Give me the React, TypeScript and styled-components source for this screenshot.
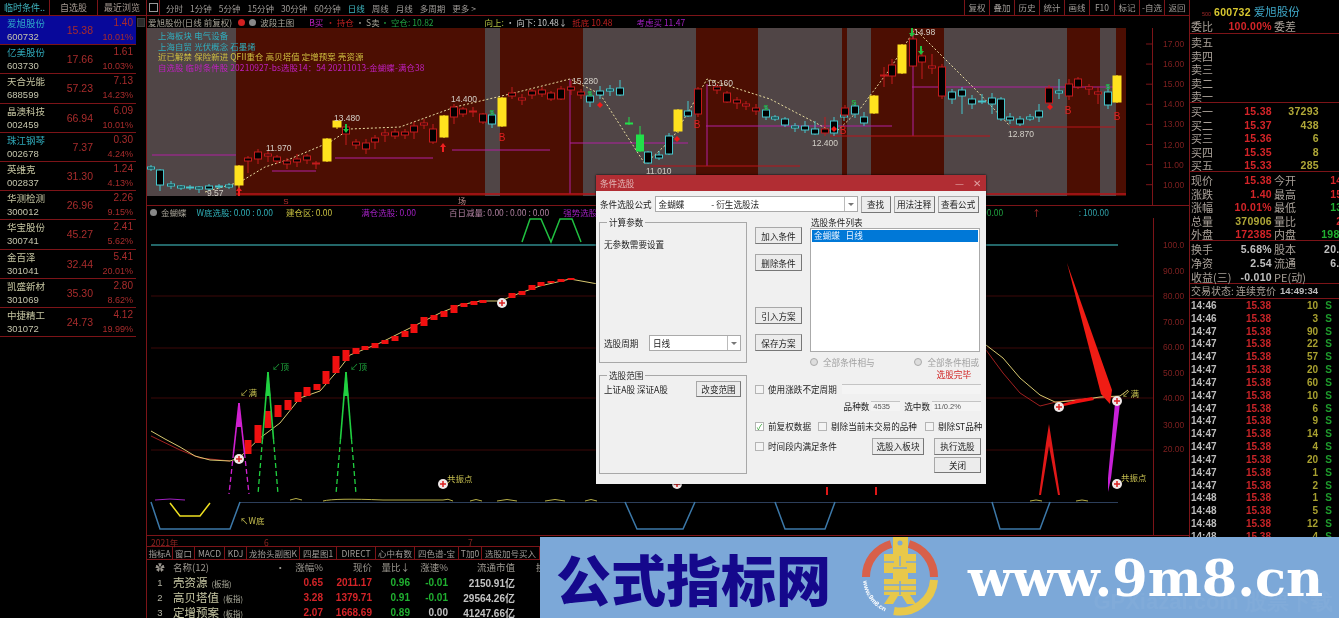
import React from "react";
import styled, { createGlobalStyle } from "styled-components";

const GlobalStyle = createGlobalStyle`
  html, body { margin: 0; padding: 0; background: #000; }
  * { box-sizing: border-box; }
`;

const CJK = `"Noto Sans CJK SC", "Noto Sans", sans-serif`;
const NUM = `"Liberation Sans", "Noto Sans CJK SC", sans-serif`;
const LINE = "#7c1418";

const Page = styled.div`
  position: relative;
  width: 1339px;
  height: 618px;
  overflow: hidden;
  background: #000;
  display: grid;
  grid-template-columns: 147px 1042px 150px;
  font-family: ${CJK};
  filter: blur(0.45px);
`;

/* left stock list */
const LeftCol = styled.div`
  border-right: 1px solid ${LINE};
  height: 100%;
`;
const LeftTabs = styled.div`
  display: grid;
  grid-template-columns: 50px 48px 48px;
  height: 16px;
  border-bottom: 1px solid ${LINE};
`;
const LeftTab = styled.div`
  font-size: 9px;
  line-height: 15px;
  color: #a89c94;
  text-align: center;
  border-right: 1px solid ${LINE};
  &:first-child { color: #3fb6c0; }
  &:last-child { border-right: 0; }
`;
const ListWrap = styled.div`
  display: flex;
`;
const StockList = styled.div`
  width: 136px;
`;
const ScrollTrack = styled.div`
  width: 10px;
  padding: 2px 1px;
`;
const ScrollBtn = styled.div`
  height: 9px;
  background: #2a2a2a;
  border: 1px solid #3c3c3c;
`;
const StockRow = styled.div<{ $active?: boolean }>`
  height: 29.2px;
  display: grid;
  grid-template-columns: 46px 40px 40px;
  padding: 0 3px 0 7px;
  align-items: center;
  background: ${(p) => (p.$active ? "#08089a" : "#000")};
  border-bottom: 1px solid ${LINE};
`;
const NameCell = styled.div`
  display: flex;
  flex-direction: column;
  white-space: nowrap;
`;
const StockName = styled.span<{ $color: string }>`
  font-size: 9.5px;
  line-height: 14px;
  color: ${(p) => p.$color};
`;
const StockCode = styled.span`
  font-family: ${NUM};
  font-size: 9.5px;
  line-height: 14px;
  color: #c4c4ac;
`;
const StockPrice = styled.div`
  font-family: ${NUM};
  font-size: 10.5px;
  color: #a82c2c;
  text-align: right;
`;
const ChangeCell = styled.div`
  display: flex;
  flex-direction: column;
  text-align: right;
  font-family: ${NUM};
  color: #a82c2c;
`;
const ChangeValue = styled.span`
  font-size: 10px;
  line-height: 14px;
`;
const ChangePct = styled.span`
  font-size: 9px;
  line-height: 14px;
`;

/* centre column */
const MainCol = styled.div`
  position: relative;
  display: flex;
  flex-direction: column;
  height: 618px;
  overflow: hidden;
`;
const Toolbar = styled.div`
  display: flex;
  justify-content: space-between;
  height: 16px;
  border-bottom: 1px solid ${LINE};
`;
const ToolGroup = styled.div`
  display: flex;
  align-items: center;
`;
const ToolIcon = styled.div`
  width: 13px;
  height: 15px;
  display: flex;
  align-items: center;
  justify-content: center;
  margin-right: 6px;
  border-right: 1px solid ${LINE};
  &::before {
    content: "";
    width: 7px;
    height: 7px;
    border: 1px solid #999;
  }
`;
const ToolItem = styled.span<{ $on?: boolean }>`
  font-size: 8.5px;
  color: ${(p) => (p.$on ? "#3fb6c0" : "#a09c98")};
  margin-right: 7px;
  white-space: nowrap;
`;
const ToolCell = styled.span`
  width: 25px;
  height: 15px;
  line-height: 15px;
  text-align: center;
  font-size: 8.5px;
  color: #a09c98;
  border-left: 1px solid ${LINE};
`;
const Legend = styled.div`
  display: flex;
  align-items: center;
  height: 13px;
  white-space: nowrap;
  position: relative;
`;
const LegendItem = styled.span<{ $color: string; $gap?: number }>`
  font-size: 8.5px;
  color: ${(p) => p.$color};
  margin-left: ${(p) => p.$gap ?? 0}px;
`;
const Dot = styled.span<{ $color: string; $gap?: number }>`
  width: 7px;
  height: 7px;
  border-radius: 50%;
  background: ${(p) => p.$color};
  margin-left: ${(p) => p.$gap ?? 0}px;
`;
const ChartBox = styled.div`
  position: relative;
  line-height: 0;
`;
const Notes = styled.div`
  position: absolute;
  left: 11px;
  top: 2px;
`;
const NoteLine = styled.div<{ $color: string }>`
  font-size: 8.4px;
  line-height: 10.6px;
  letter-spacing: 0.15px;
  color: ${(p) => p.$color};
  white-space: nowrap;
`;
const DateRow = styled.div`
  display: flex;
  height: 12px;
  border-top: 1px solid ${LINE};
  border-bottom: 1px solid ${LINE};
`;
const DateItem = styled.span<{ $w: number }>`
  width: ${(p) => p.$w}px;
  font-size: 8.5px;
  line-height: 12px;
  color: #8c2420;
  padding-left: 4px;
`;
const IndexTabs = styled.div`
  display: flex;
  height: 13px;
  border-bottom: 1px solid ${LINE};
`;
const IndexTab = styled.span<{ $w: number }>`
  width: ${(p) => p.$w}px;
  font-size: 8.5px;
  line-height: 12px;
  text-align: center;
  color: #a09c98;
  border-right: 1px solid ${LINE};
  white-space: nowrap;
  overflow: hidden;
`;
const TableRow = styled.div`
  display: grid;
  grid-template-columns: 26px 100px 12px 38px 49px 38px 38px 67px 40px;
  height: 15px;
  align-items: center;
  white-space: nowrap;
`;
const HeadCell = styled.span<{ $left?: boolean }>`
  font-size: 9.5px;
  color: #9c9890;
  text-align: ${(p) => (p.$left ? "left" : "right")};
`;
const GearCell = styled(HeadCell)`
  text-align: center;
`;
const RowNo = styled.span`
  font-family: ${NUM};
  font-size: 9.5px;
  color: #b0b0a0;
  text-align: center;
`;
const RowName = styled.span`
  font-size: 11.5px;
  color: #c8c8a4;
`;
const RowTag = styled.small`
  font-size: 7.5px;
  margin-left: 4px;
  color: #b0b0a0;
`;
const RowNum = styled.span<{ $color: string }>`
  font-family: ${NUM};
  font-size: 10px;
  font-weight: 700;
  text-align: right;
  color: ${(p) => p.$color};
`;
const RowYi = styled.span`
  font-family: ${NUM};
  font-size: 10px;
  font-weight: 700;
  text-align: right;
  color: #c4c4c4;
`;

/* right quote panel */
const RightCol = styled.div`
  border-left: 1px solid ${LINE};
  height: 100%;
  overflow: hidden;
`;
const QuoteHead = styled.div`
  display: flex;
  align-items: baseline;
  height: 18px;
  padding: 3px 0 0 12px;
`;
const QuoteHint = styled.span`
  font-family: ${NUM};
  font-size: 5.5px;
  color: #a02828;
  width: 12px;
`;
const QuoteCode = styled.span`
  font-family: ${NUM};
  font-weight: 700;
  font-size: 10.5px;
  color: #d8c830;
  letter-spacing: 0.3px;
`;
const QuoteName = styled.span`
  font-size: 11.5px;
  color: #3fa8c8;
  margin-left: 3px;
`;
const Section = styled.div`
  border-bottom: 1px solid ${LINE};
  padding-left: 1px;
`;
const QuoteRow = styled.div<{ $h: number }>`
  display: grid;
  grid-template-columns: 22px 59px 25px 61px;
  height: ${(p) => p.$h}px;
  align-items: center;
  white-space: nowrap;
`;
const BookRow = styled.div`
  display: grid;
  grid-template-columns: 22px 59px 47px;
  height: 13.6px;
  align-items: center;
`;
const QLabel = styled.span<{ $pad?: number }>`
  font-size: 11px;
  color: #a8a098;
  padding-left: ${(p) => p.$pad ?? 0}px;
`;
const QValue = styled.span<{ $color: string }>`
  font-family: ${NUM};
  font-size: 10.5px;
  font-weight: 700;
  text-align: right;
  letter-spacing: 0.3px;
  color: ${(p) => p.$color};
`;
const StatusRow = styled.div`
  display: flex;
  align-items: center;
  height: 15px;
  padding-left: 1px;
  white-space: nowrap;
  border-bottom: 1px solid ${LINE};
  font-size: 10px;
  color: #a8a098;
`;
const StatusTime = styled.span`
  font-family: ${NUM};
  font-size: 9.5px;
  font-weight: 700;
  margin-left: 4px;
  color: #bcbcbc;
`;
const TickRow = styled.div`
  display: grid;
  grid-template-columns: 29px 51px 47px 14px;
  height: 12.85px;
  align-items: center;
  padding-left: 1px;
  font-family: ${NUM};
  font-size: 10px;
  font-weight: 700;
`;
const TickTime = styled.span`
  color: #bcbcbc;
`;
const TickPrice = styled.span`
  color: #c82428;
  text-align: right;
`;
const TickQty = styled.span`
  color: #a8a030;
  text-align: right;
`;
const TickSide = styled.span`
  color: #1e9a2c;
  text-align: right;
`;

/* dialog */
const Dialog = styled.div`
  position: absolute;
  left: 596px;
  top: 175px;
  width: 390px;
  height: 309px;
  background: #f0f0f0;
  color: #222;
  font-size: 8.6px;
  box-shadow: 0 0 2px #000;
`;
const DialogTitle = styled.div`
  display: flex;
  align-items: center;
  justify-content: space-between;
  height: 16px;
  padding: 0 5px 0 4px;
  background: #b12d33;
  color: #e2b4b4;
  font-size: 8.6px;
`;
const WinBtns = styled.span`
  display: flex;
  gap: 9px;
  align-items: center;
  color: #e0a0a0;
  font-size: 10px;
  line-height: 1;
`;
const DialogBody = styled.div`
  padding: 5px 5px 0 3px;
`;
const FormulaRow = styled.div`
  display: flex;
  align-items: center;
  gap: 3px;
  height: 16px;
  padding-left: 1px;
`;
const FieldText = styled.span`
  white-space: nowrap;
`;
const Combo = styled.div<{ $w: number }>`
  width: ${(p) => p.$w}px;
  height: 16px;
  display: flex;
  align-items: center;
  background: #fff;
  border: 1px solid #aaa;
  padding-left: 3px;
  white-space: pre;
  position: relative;
  justify-content: space-between;
`;
const ComboArrow = styled.span`
  width: 13px;
  height: 100%;
  border-left: 1px solid #bbb;
  display: flex;
  align-items: center;
  justify-content: center;
  &::before {
    content: "";
    border: 3px solid transparent;
    border-top: 3px solid #777;
    margin-top: 3px;
  }
`;
const Btn = styled.button<{ $w: number; $h?: number; $ml?: number }>`
  width: ${(p) => p.$w}px;
  height: ${(p) => p.$h ?? 17}px;
  margin-left: ${(p) => p.$ml ?? 0}px;
  padding: 0;
  font-family: ${CJK};
  font-size: 8.6px;
  color: #222;
  background: #ececec;
  border: 1px solid #a8a8a8;
  border-right-color: #777;
  border-bottom-color: #777;
  white-space: nowrap;
`;
const Columns = styled.div`
  display: flex;
  gap: 8px;
  margin-top: 5px;
`;
const LeftPane = styled.div`
  width: 149px;
  display: flex;
  flex-direction: column;
  gap: 7px;
`;
const Group = styled.fieldset<{ $h: number }>`
  height: ${(p) => p.$h}px;
  margin: 0;
  padding: 0 5px 0 4px;
  border: 1px solid #a8a8a8;
  min-width: 0;
  display: flex;
  flex-direction: column;
`;
const GroupTitle = styled.legend`
  padding: 0 2px;
  margin-left: 3px;
  font-size: 8.6px;
  line-height: 10px;
`;
const GroupLine = styled.div<{ $mt: number }>`
  display: flex;
  align-items: center;
  justify-content: space-between;
  margin-top: ${(p) => p.$mt}px;
`;
const RightPane = styled.div`
  width: 226px;
`;
const TopPane = styled.div`
  display: flex;
  gap: 8px;
`;
const ButtonStack = styled.div`
  width: 47px;
  display: flex;
  flex-direction: column;
  padding-top: 10px;
`;
const StackBtn = styled(Btn)<{ $mt?: number }>`
  margin-top: ${(p) => p.$mt ?? 0}px;
`;
const ListPane = styled.div`
  width: 170px;
`;
const ListLabel = styled.div`
  height: 11px;
  line-height: 10px;
  padding-left: 1px;
`;
const ListBox = styled.div`
  height: 124px;
  background: #fff;
  border: 1px solid #aaa;
  padding: 1px;
`;
const ListItem = styled.div`
  height: 12px;
  line-height: 11px;
  padding-left: 2px;
  background: #0078d7;
  color: #e8f2ff;
  white-space: pre;
`;
const RadioRow = styled.div`
  display: flex;
  justify-content: space-between;
  height: 14px;
  margin-top: 3px;
  padding: 0 2px 0 55px;
  align-items: center;
`;
const Radio = styled.span`
  display: flex;
  align-items: center;
  gap: 5px;
  color: #a0a0a0;
  &::before {
    content: "";
    width: 6px;
    height: 6px;
    border-radius: 50%;
    border: 1px solid #aaa;
    background: #ddd;
  }
`;
const DoneText = styled.div`
  text-align: right;
  color: #d02020;
  padding-right: 10px;
  height: 10px;
  line-height: 10px;
`;
const OptionRow = styled.div<{ $mt: number; $h?: number }>`
  display: flex;
  align-items: center;
  margin-top: ${(p) => p.$mt}px;
  height: ${(p) => p.$h ?? 12}px;
  white-space: nowrap;
`;
const Check = styled.span<{ $on?: boolean; $gap?: number }>`
  width: 9px;
  height: 9px;
  flex: none;
  margin-left: ${(p) => p.$gap ?? 0}px;
  margin-right: 4px;
  background: ${(p) => (p.$on ? "#fff" : "#f4f4f4")};
  border: 1px solid #b4b4b4;
  color: #30a030;
  font-size: 8px;
  line-height: 7px;
  text-align: center;
`;
const ReadOnly = styled.div<{ $w: number; $gap?: number }>`
  width: ${(p) => p.$w}px;
  height: 10px;
  line-height: 9px;
  margin-left: ${(p) => p.$gap ?? 0}px;
  padding-left: 2px;
  background: #f4f4f4;
  border-top: 1px solid #c4c4c4;
  font-size: 7.5px;
  color: #555;
  font-family: ${NUM};
`;
const Spacer = styled.span`
  flex: 1;
`;

/* watermark banner */
const Banner = styled.div`
  position: absolute;
  left: 540px;
  top: 537px;
  width: 799px;
  height: 81px;
  background: #7ca8d8;
  display: flex;
  align-items: center;
`;
const BannerTitle = styled.div`
  width: 315px;
  padding-left: 16px;
  font-size: 55px;
  line-height: 81px;
  font-weight: 900;
  color: #15088c;
  white-space: nowrap;
`;
const BannerUrl = styled.div`
  margin-left: 23px;
  font-family: "DejaVu Serif", serif;
  font-weight: 700;
  font-size: 51px;
  color: #fff;
  white-space: nowrap;
`;
const BannerFaint = styled.div`
  position: absolute;
  right: 6px;
  bottom: 1px;
  font-family: "Liberation Sans", sans-serif;
  font-weight: 700;
  font-size: 22px;
  color: rgba(255, 255, 255, 0.04);
`;

type Kind = "r" | "c" | "y" | "g";
const candles: [number, number, number, number, number, Kind][] = [
  [151, 166, 168, 170, 172, "c"], [160, 170, 171, 186, 192, "c"], [171, 182, 185, 187, 190, "c"], [181, 186, 187, 189, 191, "c"],
  [190, 186, 188, 189, 191, "c"], [199, 187, 188, 190, 194, "c"], [209, 185, 187, 190, 192, "c"], [219, 185, 187, 188, 190, "c"],
  [229, 184, 186, 188, 190, "c"], [239, 166, 167, 186, 190, "y"], [248, 157, 159, 162, 174, "r"], [258, 150, 153, 160, 165, "r"],
  [268, 152, 155, 157, 163, "r"], [277, 156, 158, 162, 165, "r"], [287, 159, 162, 165, 170, "r"], [297, 155, 160, 163, 168, "r"],
  [307, 155, 157, 161, 165, "r"], [316, 162, 164, 165, 170, "r"], [327, 139, 140, 162, 163, "y"], [337, 121, 122, 128, 130, "y"],
  [346, 125, 128, 135, 146, "r"], [356, 140, 143, 146, 150, "r"], [366, 140, 144, 150, 155, "r"], [375, 136, 139, 143, 150, "r"],
  [385, 130, 134, 136, 143, "r"], [395, 130, 133, 137, 140, "r"], [405, 130, 133, 136, 140, "r"], [414, 123, 127, 133, 140, "r"],
  [424, 120, 124, 126, 130, "r"], [433, 125, 130, 143, 145, "r"], [444, 116, 117, 138, 139, "y"], [454, 105, 108, 118, 125, "r"],
  [463, 108, 110, 115, 118, "r"], [473, 108, 112, 113, 118, "r"], [483, 114, 115, 123, 125, "r"], [492, 112, 116, 125, 129, "c"],
  [502, 98, 99, 127, 128, "y"], [512, 88, 94, 97, 100, "r"], [522, 95, 99, 101, 106, "r"], [532, 90, 92, 96, 100, "r"],
  [542, 88, 91, 95, 98, "r"], [551, 92, 94, 100, 102, "r"], [561, 87, 90, 100, 101, "r"], [571, 82, 88, 91, 96, "r"],
  [581, 90, 93, 96, 100, "r"], [590, 92, 97, 103, 108, "c"], [600, 87, 92, 96, 100, "c"], [610, 86, 90, 92, 97, "c"],
  [620, 81, 89, 96, 97, "c"], [629, 118, 124, 125, 126, "g"], [640, 127, 136, 152, 153, "g"], [648, 152, 153, 164, 165, "c"],
  [659, 152, 156, 159, 161, "c"], [669, 134, 137, 155, 156, "c"], [678, 110, 111, 132, 134, "y"], [688, 102, 112, 117, 118, "c"],
  [698, 88, 90, 115, 118, "r"], [717, 85, 88, 91, 95, "r"], [727, 92, 94, 103, 104, "r"], [737, 98, 101, 104, 110, "r"],
  [746, 102, 105, 107, 111, "r"], [756, 105, 109, 112, 116, "r"], [766, 107, 111, 118, 121, "c"], [775, 116, 118, 120, 122, "c"],
  [785, 118, 120, 126, 128, "c"], [795, 124, 127, 129, 133, "c"], [805, 122, 127, 131, 134, "c"], [815, 122, 130, 135, 136, "c"],
  [825, 118, 130, 134, 137, "r"], [834, 118, 122, 134, 137, "c"], [844, 114, 116, 118, 122, "c"], [845, 106, 109, 116, 118, "r"],
  [855, 103, 107, 115, 119, "c"], [864, 113, 118, 124, 127, "c"], [874, 96, 97, 114, 115, "y"], [884, 68, 76, 77, 88, "r"],
  [892, 60, 66, 77, 85, "r"], [902, 45, 46, 74, 75, "y"], [913, 30, 40, 67, 68, "r"], [922, 50, 57, 63, 80, "r"],
  [932, 55, 67, 69, 75, "r"], [942, 65, 68, 97, 100, "r"], [952, 90, 93, 100, 105, "c"], [962, 88, 91, 97, 115, "c"],
  [972, 96, 100, 105, 110, "c"], [982, 95, 102, 103, 105, "c"], [992, 94, 99, 105, 115, "c"], [1001, 98, 100, 120, 122, "c"],
  [1010, 114, 118, 121, 125, "c"], [1020, 117, 120, 125, 127, "c"], [1030, 115, 118, 120, 122, "c"], [1039, 105, 112, 118, 123, "c"],
  [1049, 86, 89, 104, 106, "r"], [1059, 80, 92, 94, 100, "c"], [1069, 80, 85, 97, 101, "r"], [1078, 78, 80, 88, 90, "r"],
  [1089, 85, 88, 90, 96, "r"], [1098, 88, 93, 95, 105, "r"], [1108, 85, 93, 106, 110, "c"], [1117, 76, 77, 103, 104, "y"],
];

const bands: [number, number, boolean][] = [
  [147, 236, false], [236, 485, true], [485, 500, false], [500, 583, true], [583, 696, false], [696, 758, true],
  [758, 842, false], [842, 847, true], [847, 871, false], [871, 944, true], [944, 1067, false], [1067, 1100, true],
  [1100, 1116, false], [1116, 1126, true],
];

const purpleLines: [number, number, number, number][] = [
  [152, 156, 236, 156], [272, 172, 316, 172], [335, 159, 433, 159], [452, 151, 550, 151], [570, 144, 688, 144], [570, 80, 570, 195],
  [706, 127, 892, 127], [707, 85, 707, 167], [912, 88, 1118, 88], [913, 30, 913, 137],
];
const redLines: [number, number, number, number][] = [
  [236, 195, 1126, 195], [650, 167, 800, 167], [830, 137, 990, 137], [1010, 128, 1115, 128],
];
const trend = "205,193 240,183 265,168 290,160 330,143 350,130 400,128 455,108 510,95 570,80 600,95 645,165 672,140 690,110 707,80 770,100 835,134 860,110 890,70 915,30 945,60 975,90 1010,127";
const priceTags: [number, number, string][] = [
  [207, 197, "9.57"], [266, 152, "11.970"], [334, 122, "13.480"], [451, 103, "14.400"], [572, 85, "15.280"], [707, 87, "15.160"],
  [646, 175, "11.010"], [812, 147, "12.400"], [1008, 138, "12.870"], [914, 36, "14.98"],
];
const buyMarks: [number, number][] = [[502, 142], [697, 129], [843, 135], [1068, 115], [1117, 121]];
const greenS: [number, number][] = [[590, 97], [492, 116], [766, 111], [854, 106], [1108, 90]];
const diamonds: [number, number][] = [[600, 106], [677, 140], [834, 130], [1050, 108]];
const axisTop = ["17.00", "16.00", "15.00", "14.00", "13.00", "12.00", "11.00", "10.00"];

const KLineChart = () => (
  <svg width={1042} height={178} viewBox="147 29 1042 178">
    {bands.map(([a, b, warm]) => (
      <rect key={a} x={a} y={29} width={b - a} height={168} fill={warm ? "#4c0e02" : "#504546"} />
    ))}
    {purpleLines.map(([x1, y1, x2, y2], i) => (
      <line key={i} x1={x1} y1={y1} x2={x2} y2={y2} stroke="#b020a0" strokeWidth={1} />
    ))}
    {redLines.map(([x1, y1, x2, y2], i) => (
      <line key={i} x1={x1} y1={y1} x2={x2} y2={y2} stroke="#b8141a" strokeWidth={i === 0 ? 1.5 : 1} />
    ))}
    <polyline points={trend} fill="none" stroke="#e8dca0" strokeWidth={1} strokeDasharray="2 2" />
    {candles.map(([x, wt, t, b, wb, k], i) => {
      const col = { r: "#c41a1c", c: "#45c6cc", y: "#ffe21e", g: "#22e04a" }[k];
      const solid = k === "y" || k === "g";
      const w = k === "y" ? 8 : 7;
      return (
        <g key={i}>
          <line x1={x} y1={wt} x2={x} y2={wb} stroke={col} />
          <rect x={x - w / 2} y={t} width={w} height={b - t} fill={solid ? col : "#000"} stroke={col} />
        </g>
      );
    })}
    {priceTags.map(([x, y, t]) => (
      <text key={t} x={x} y={y} fontFamily="Liberation Sans" fontSize={8.5} fill="#d4d0c8">{t}</text>
    ))}
    {buyMarks.map(([x, y]) => (
      <text key={x} x={x} y={y} textAnchor="middle" fontFamily="Liberation Sans" fontSize={10} fill="#e02020">B</text>
    ))}
    {greenS.map(([x, y]) => (
      <text key={x} x={x} y={y} textAnchor="middle" fontFamily="Liberation Sans" fontSize={8} fontWeight={700} fill="#20b040">S</text>
    ))}
    {diamonds.map(([x, y]) => (
      <polygon key={x} points={`${x},${y - 3} ${x + 3},${y} ${x},${y + 3} ${x - 3},${y}`} fill="#f01818" />
    ))}
    <path d="M239 188l3 4h-2v5h-2v-5h-2zM443 144l3 4h-2v5h-2v-5h-2z" fill="#f02020" />
    <path d="M346 134l3-4h-2v-5h-2v5h-2zM921 56l3-4h-2v-5h-2v5h-2zM912 38l3-4h-2v-5h-2v5h-2z" fill="#20c040" />
    <text x={286} y={205} textAnchor="middle" fontFamily="Liberation Sans" fontSize={8} fill="#c03030">S</text>
    <text x={462} y={205} textAnchor="middle" fontFamily="Noto Sans CJK SC" fontSize={8} fill="#c08888">场</text>
    <line x1={1152.5} y1={29} x2={1152.5} y2={207} stroke={LINE} />
    <line x1={147} y1={206.5} x2={1189} y2={206.5} stroke={LINE} />
    {axisTop.map((t, i) => (
      <g key={t}>
        <line x1={1146} x2={1152} y1={45 + i * 20.1} y2={45 + i * 20.1} stroke={LINE} />
        <text x={1163} y={48 + i * 20.1} fontFamily="Liberation Sans" fontSize={8.5} fill="#7e2020">{t}</text>
      </g>
    ))}
  </svg>
);

const redBars: [number, number, number][] = [
  [248, 442, 456], [258, 427, 445], [268, 413, 430], [278, 407, 419], [288, 402, 412], [298, 394, 404], [307, 389, 398], [317, 386, 392],
  [326, 373, 386], [336, 358, 375], [346, 352, 363], [356, 350, 356], [365, 348, 352], [375, 345, 350], [385, 342, 346], [395, 338, 343],
  [405, 333, 339], [414, 326, 335], [424, 319, 328], [434, 317, 322], [444, 313, 319], [454, 307, 315], [464, 305, 309], [474, 303, 307],
  [483, 302, 305], [512, 295, 300], [522, 293, 297], [532, 287, 292], [541, 284, 288], [551, 283, 285], [561, 281, 284], [571, 280, 282],
];
const axisLow: [string, number][] = [
  ["100.0", 250], ["90.00", 276], ["80.00", 301], ["70.00", 327], ["60.00", 352], ["50.00", 378], ["40.00", 403], ["30.00", 430], ["20.00", 454],
];
const plusMarks: [number, number][] = [[239, 461], [502, 305], [443, 486], [677, 486], [1059, 409], [1117, 403], [1117, 486]];
const trapezoids = [
  "151,504 160,531 230,531 240,504", "625,504 637,531 683,531 695,504", "775,504 785,531 825,531 835,504", "992,504 1000,531 1040,531 1050,504",
];
const spikes: [number, number, string][] = [[239, 405, "#d020d0"], [268, 374, "#20d040"], [346, 374, "#20d040"]];
const humps = [
  "M290 502q6-3 12 0", "M323 503q12-3 60 -1", "M383 502h60", "M443 502q5-2 10 1", "M470 503q6-3 12 0", "M497 503q10-3 20 0", "M545 503q10-3 20 0", "M585 503q6-3 12 0",
  "M1030 503q6-2 12 0", "M1076 503q6-2 12 0",
];

const IndicatorChart = () => (
  <svg width={1042} height={317} viewBox="147 220 1042 317">
    {[298, 350, 400, 452].map((y) => (
      <line key={y} x1={151} x2={1153} y1={y} y2={y} stroke="#3c0808" />
    ))}
    <line x1={151} x2={1118} y1={247} y2={247} stroke="#2f8a8c" strokeWidth={1.5} />
    <polyline points="522,244 530,221 541,221 551,244 560,221 572,221 581,244" fill="none" stroke="#20c040" strokeWidth={1.5} />
    <polyline points="151,438 180,452 200,460 230,463" fill="none" stroke="#a02020" />
    <polyline points="151,433 165,441 180,449 195,458 210,462 230,463 239,460 260,440 280,425 300,400 320,393 340,370 350,357 380,345 400,335 420,325 440,315 460,307 480,303 500,303 520,295 540,288 570,281 598,286" fill="none" stroke="#d8c870" />
    <polyline points="986,352 1003,375 1020,395 1040,408 1056,404 1080,401 1117,399" fill="none" stroke="#a02020" />
    <polyline points="986,347 1003,360 1020,380 1040,397 1055,404 1058,404 1080,402 1100,399 1120,398 1128,392" fill="none" stroke="#d8c870" />
    {redBars.map(([x, t, b]) => (
      <rect key={x} x={x - 3.5} y={t} width={7} height={b - t} fill="#f01010" />
    ))}
    <path d="M1062 406l14-4 16-3 2 3-16 3-14 3z" fill="#f01010" />
    {spikes.map(([x, y, c]) => {
      const mid = y + (496 - y) * 0.55;
      const off = ((mid - y) / (496 - y)) * 10;
      return (
        <g key={x}>
          <polygon points={`${x},${y} ${x + 2.5},${y + 24} ${x - 2.5},${y + 24}`} fill={c} />
          <polyline points={`${x},${y} ${x - off},${mid}`} stroke={c} strokeWidth={1.6} fill="none" />
          <polyline points={`${x},${y} ${x + off},${mid}`} stroke={c} strokeWidth={1.6} fill="none" />
          <polyline points={`${x - off},${mid} ${x - 10},496`} stroke={c} strokeWidth={1.3} strokeDasharray="5 3" fill="none" />
          <polyline points={`${x + off},${mid} ${x + 10},496`} stroke={c} strokeWidth={1.3} strokeDasharray="5 3" fill="none" />
        </g>
      );
    })}
    <polygon points="1049,426 1052,445 1060,497 1058,497 1049,448 1041,497 1039,497 1046,445" fill="#e01818" />
    <path d="M827 489v8M876 489v8" stroke="#e01818" strokeWidth={2} />
    <polygon points="1115,405 1120,405 1111,480 1108,494 1108,480" fill="#c820d8" />
    <polygon points="1067,265 1112,392 1110,406 1101,396" fill="#f01c14" />
    {humps.map((d) => (
      <path key={d} d={d} fill="none" stroke="#b8b048" />
    ))}
    <path d="M155 502q15-2 30 0" fill="none" stroke="#a020c0" />
    <line x1={240} x2={1118} y1={504.5} y2={504.5} stroke="#2c3e5a" />
    {trapezoids.map((p) => (
      <polyline key={p} points={p} fill="none" stroke="#3c78a8" strokeWidth={1.5} />
    ))}
    <polyline points="170,505 180,518 200,518 210,505" fill="none" stroke="#eee020" strokeWidth={1.5} />
    {plusMarks.map(([x, y]) => (
      <g key={`${x}-${y}`}>
        <circle cx={x} cy={y} r={5} fill="#f0e8e8" />
        <path d={`M${x - 3} ${y}h6M${x} ${y - 3}v6`} stroke="#d82020" strokeWidth={1.5} />
      </g>
    ))}
    <g fontFamily="Noto Sans CJK SC" fontSize={8.5}>
      <text x={240} y={398} fill="#c8c050">↙满</text>
      <text x={272} y={372} fill="#20b040">↙顶</text>
      <text x={350} y={372} fill="#20b040">↙顶</text>
      <text x={447} y={484} fill="#c8c050">共振点</text>
      <text x={1121} y={483} fill="#c8c050">共振点</text>
      <text x={1122} y={399} fill="#c8c050">↙满</text>
      <text x={240} y={526} fill="#c8c050">↖W底</text>
    </g>
    <line x1={1153.5} y1={220} x2={1153.5} y2={537} stroke={LINE} />
    {axisLow.map(([t, y]) => (
      <text key={t} x={1163} y={y} fontFamily="Liberation Sans" fontSize={8.5} fill="#7e2020">{t}</text>
    ))}
  </svg>
);

const stocks = [
  ["爱旭股份", "600732", "15.38", "1.40", "10.01%", "#2fa8c8"],
  ["亿美股份", "603730", "17.66", "1.61", "10.03%", "#2fa8b8"],
  ["天合光能", "688599", "57.23", "7.13", "14.23%", "#c4c4a0"],
  ["晶澳科技", "002459", "66.94", "6.09", "10.01%", "#c4c4a0"],
  ["珠江钢琴", "002678", "7.37", "0.30", "4.24%", "#2fa8b8"],
  ["英维克", "002837", "31.30", "1.24", "4.13%", "#c4c4a0"],
  ["华测检测", "300012", "26.96", "2.26", "9.15%", "#c4c4a0"],
  ["华宝股份", "300741", "45.27", "2.41", "5.62%", "#c4c4a0"],
  ["金百泽", "301041", "32.44", "5.41", "20.01%", "#c4c4a0"],
  ["凯盛新材", "301069", "35.30", "2.80", "8.62%", "#c4c4a0"],
  ["中捷精工", "301072", "24.73", "4.12", "19.99%", "#c4c4a0"],
];
const ticks: [string, string][] = [
  ["14:46", "10"], ["14:46", "3"], ["14:47", "90"], ["14:47", "22"], ["14:47", "57"], ["14:47", "20"], ["14:47", "60"], ["14:47", "10"],
  ["14:47", "6"], ["14:47", "9"], ["14:47", "14"], ["14:47", "4"], ["14:47", "20"], ["14:47", "1"], ["14:47", "2"], ["14:48", "1"],
  ["14:48", "5"], ["14:48", "12"], ["14:48", "4"],
];
const RED = "#d42428";
const YEL = "#b0a838";
const GRN = "#20b030";
const WHT = "#c0c0c0";
const book = [
  ["买一", "15.38", "37293"], ["买二", "15.37", "438"], ["买三", "15.36", "6"], ["买四", "15.35", "8"], ["买五", "15.33", "285"],
];
const quoteA = [
  ["现价", "15.38", RED, "今开", "14.00", RED], ["涨跌", "1.40", RED, "最高", "15.38", RED], ["涨幅", "10.01%", RED, "最低", "13.84", GRN],
  ["总量", "370906", YEL, "量比", "2.07", RED], ["外盘", "172385", RED, "内盘", "198521", GRN],
];
const quoteB = [
  ["换手", "5.68%", WHT, "股本", "20.364", WHT], ["净资", "2.54", WHT, "流通", "6.524", WHT], ["收益(三)", "-0.010", WHT, "PE(动)", "", WHT],
];
const periodTabs = ["1分钟", "5分钟", "15分钟", "30分钟", "60分钟"];
const rightTabs = ["复权", "叠加", "历史", "统计", "画线", "F10", "标记", "-自选", "返回"];
const indexTabs: [string, number][] = [
  ["指标A", 26], ["窗口", 22], ["MACD", 30], ["KDJ", 22], ["龙抬头副图K", 53], ["四星图1", 37], ["DIRECT", 39], ["心中有数", 39], ["四色谱-宝", 44], ["T加0", 23], ["选股加号买入", 58],
];
const rows = [
  ["1", "壳资源", "0.65", "2011.17", "0.96", "-0.01", GRN, "2150.91亿"],
  ["2", "高贝塔值", "3.28", "1379.71", "0.91", "-0.01", GRN, "29564.26亿"],
  ["3", "定增预案", "2.07", "1668.69", "0.89", "0.00", WHT, "41247.66亿"],
];

const Logo = () => (
  <svg width={90} height={81} viewBox="0 0 90 81">
    <path d="M11 40A34 34 0 0 1 36 7" fill="none" stroke="#d8604a" strokeWidth={8} />
    <path d="M54 7A34 34 0 0 1 79 40" fill="none" stroke="#d8604a" strokeWidth={8} />
    <path d="M79 43A34 34 0 0 1 39 74" fill="none" stroke="#e8c84a" strokeWidth={8} />
    <path d="M38 0h15v17h8v19H53v6h8v16h-6l6 9H52l-5-8h-4l-5 8H29l6-9h-6V42h9v-6H29V17h9z" fill="#e8c84a" />
    <circle cx={45} cy={6} r={2.5} fill="#7ca8d8" />
    <path d="M29 25h10M51 25h10M38 31h14M45 19v10M29 48h32M29 54h32M45 44v14" stroke="#7ca8d8" strokeWidth={1.5} fill="none" />
    <path id="logoArc" d="M8 44A37 37 0 0 0 38 77" fill="none" />
    <text fontFamily="Liberation Sans" fontSize={6.5} fontWeight={700} fill="#fff">
      <textPath href="#logoArc">www.9m8.cn</textPath>
    </text>
  </svg>
);

const App: React.FC = () => (
  <Page>
    <GlobalStyle />
    <LeftCol>
      <LeftTabs>
        <LeftTab>临时条件..</LeftTab>
        <LeftTab>自选股</LeftTab>
        <LeftTab>最近浏览</LeftTab>
      </LeftTabs>
      <ListWrap>
        <StockList>
          {stocks.map(([name, code, price, chg, pct, color], i) => (
            <StockRow key={code} $active={i === 0}>
              <NameCell>
                <StockName $color={color}>{name}</StockName>
                <StockCode>{code}</StockCode>
              </NameCell>
              <StockPrice>{price}</StockPrice>
              <ChangeCell>
                <ChangeValue>{chg}</ChangeValue>
                <ChangePct>{pct}</ChangePct>
              </ChangeCell>
            </StockRow>
          ))}
        </StockList>
        <ScrollTrack>
          <ScrollBtn />
        </ScrollTrack>
      </ListWrap>
    </LeftCol>

    <MainCol>
      <Toolbar>
        <ToolGroup>
          <ToolIcon />
          <ToolItem>分时</ToolItem>
          {periodTabs.map((t) => (
            <ToolItem key={t}>{t}</ToolItem>
          ))}
          <ToolItem $on>日线</ToolItem>
          <ToolItem>周线</ToolItem>
          <ToolItem>月线</ToolItem>
          <ToolItem>多周期</ToolItem>
          <ToolItem>更多 &gt;</ToolItem>
        </ToolGroup>
        <ToolGroup>
          {rightTabs.map((t) => (
            <ToolCell key={t}>{t}</ToolCell>
          ))}
        </ToolGroup>
      </Toolbar>
      <Legend>
        <LegendItem $color="#a8a498" $gap={1}>爱旭股份(日线 前复权)</LegendItem>
        <Dot $color="#d02020" $gap={6} />
        <Dot $color="#888" $gap={4} />
        <LegendItem $color="#a8a498" $gap={4}>波段主图</LegendItem>
        <LegendItem $color="#c020c0" $gap={15}>B买</LegendItem>
        <LegendItem $color="#c02020" $gap={3}>· 持仓</LegendItem>
        <LegendItem $color="#a8a498" $gap={2}>· S卖</LegendItem>
        <LegendItem $color="#20a040" $gap={1}>· 空仓: 10.82</LegendItem>
        <LegendItem $color="#b0c040" $gap={51}>向上:</LegendItem>
        <LegendItem $color="#c8c8c8" $gap={2}>· 向下: 10.48↓</LegendItem>
        <LegendItem $color="#c02020" $gap={5}>抵底 10.48</LegendItem>
        <LegendItem $color="#a020c0" $gap={24}>考虑买 11.47</LegendItem>
      </Legend>
      <ChartBox>
        <KLineChart />
        <Notes>
          <NoteLine $color="#30b0c0">上海板块 电气设备</NoteLine>
          <NoteLine $color="#30b0c0">上海自贸 光伏概念 石墨烯</NoteLine>
          <NoteLine $color="#d0c040">近已解禁 保险新进 QFII重仓 高贝塔值 定增预案 壳资源</NoteLine>
          <NoteLine $color="#c020c0">自选股 临时条件股 20210927-bs选股14：54 20211013-金蝴蝶-满仓38</NoteLine>
        </Notes>
      </ChartBox>
      <Legend>
        <Dot $color="#888" $gap={3} />
        <LegendItem $color="#a8a498" $gap={4}>金蝴蝶</LegendItem>
        <LegendItem $color="#30b0b8" $gap={10}>W底选股: 0.00 : 0.00</LegendItem>
        <LegendItem $color="#c8c040" $gap={13}>建仓区: 0.00</LegendItem>
        <LegendItem $color="#a020c0" $gap={29}>满仓选股: 0.00</LegendItem>
        <LegendItem $color="#b080a0" $gap={33}>百日减量: 0.00 : 0.00 : 0.00</LegendItem>
        <LegendItem $color="#a020c0" $gap={14}>强势选股</LegendItem>
        <LegendItem $color="#20a040" $gap={380}>100.00</LegendItem>
        <LegendItem $color="#c03030" $gap={29}>↑</LegendItem>
        <LegendItem $color="#30a0a8" $gap={38}>: 100.00</LegendItem>
      </Legend>
      <ChartBox>
        <IndicatorChart />
      </ChartBox>
      <DateRow>
        <DateItem $w={113}>2021年</DateItem>
        <DateItem $w={204}>6</DateItem>
        <DateItem $w={100}>7</DateItem>
      </DateRow>
      <IndexTabs>
        {indexTabs.map(([t, w]) => (
          <IndexTab key={t} $w={w}>{t}</IndexTab>
        ))}
      </IndexTabs>
      <TableRow>
        <GearCell>✿</GearCell>
        <HeadCell $left>名称(12)</HeadCell>
        <HeadCell>•</HeadCell>
        <HeadCell>涨幅%</HeadCell>
        <HeadCell>现价</HeadCell>
        <HeadCell>量比↓</HeadCell>
        <HeadCell>涨速%</HeadCell>
        <HeadCell>流通市值</HeadCell>
        <HeadCell>换手</HeadCell>
      </TableRow>
      {rows.map(([no, name, rise, price, ratio, speed, speedColor, cap]) => (
        <TableRow key={no}>
          <RowNo>{no}</RowNo>
          <RowName>
            {name}
            <RowTag>(板指)</RowTag>
          </RowName>
          <span />
          <RowNum $color={RED}>{rise}</RowNum>
          <RowNum $color={RED}>{price}</RowNum>
          <RowNum $color={GRN}>{ratio}</RowNum>
          <RowNum $color={speedColor}>{speed}</RowNum>
          <RowYi>{cap}</RowYi>
          <span />
        </TableRow>
      ))}
    </MainCol>

    <RightCol>
      <QuoteHead>
        <QuoteHint>500</QuoteHint>
        <QuoteCode>600732</QuoteCode>
        <QuoteName>爱旭股份</QuoteName>
      </QuoteHead>
      <Section>
        <QuoteRow $h={15}>
          <QLabel>委比</QLabel>
          <QValue $color={RED}>100.00%</QValue>
          <QLabel $pad={2}>委差</QLabel>
          <QValue $color={RED}>38</QValue>
        </QuoteRow>
      </Section>
      <Section>
        {["卖五", "卖四", "卖三", "卖二", "卖一"].map((t) => (
          <BookRow key={t}>
            <QLabel>{t}</QLabel>
          </BookRow>
        ))}
      </Section>
      <Section>
        {book.map(([t, p, q]) => (
          <BookRow key={t}>
            <QLabel>{t}</QLabel>
            <QValue $color={RED}>{p}</QValue>
            <QValue $color={YEL}>{q}</QValue>
          </BookRow>
        ))}
      </Section>
      <Section>
        {quoteA.map(([a, b, c, d, e, f]) => (
          <QuoteRow key={a} $h={13.6}>
            <QLabel>{a}</QLabel>
            <QValue $color={c}>{b}</QValue>
            <QLabel $pad={2}>{d}</QLabel>
            <QValue $color={f}>{e}</QValue>
          </QuoteRow>
        ))}
      </Section>
      <Section>
        {quoteB.map(([a, b, c, d, e, f]) => (
          <QuoteRow key={a} $h={14}>
            <QLabel>{a}</QLabel>
            <QValue $color={c}>{b}</QValue>
            <QLabel $pad={2}>{d}</QLabel>
            <QValue $color={f}>{e}</QValue>
          </QuoteRow>
        ))}
      </Section>
      <StatusRow>
        交易状态: 连续竞价
        <StatusTime>14:49:34</StatusTime>
      </StatusRow>
      {ticks.map(([time, qty], i) => (
        <TickRow key={i}>
          <TickTime>{time}</TickTime>
          <TickPrice>15.38</TickPrice>
          <TickQty>{qty}</TickQty>
          <TickSide>S</TickSide>
        </TickRow>
      ))}
    </RightCol>

    <Dialog>
      <DialogTitle>
        条件选股
        <WinBtns>
          <span>—</span>
          <span>✕</span>
        </WinBtns>
      </DialogTitle>
      <DialogBody>
        <FormulaRow>
          <FieldText>条件选股公式</FieldText>
          <Combo $w={203}>
            {"金蝴蝶              - 衍生选股法"}
            <ComboArrow />
          </Combo>
          <Btn $w={30}>查找</Btn>
          <Btn $w={41}>用法注释</Btn>
          <Btn $w={41}>查看公式</Btn>
        </FormulaRow>
        <Columns>
          <LeftPane>
            <Group $h={146}>
              <GroupTitle>计算参数</GroupTitle>
              <GroupLine $mt={11}>无参数需要设置</GroupLine>
              <GroupLine $mt={85}>
                <FieldText>选股周期</FieldText>
                <Combo $w={92}>
                  日线
                  <ComboArrow />
                </Combo>
              </GroupLine>
            </Group>
            <Group $h={104}>
              <GroupTitle>选股范围</GroupTitle>
              <GroupLine $mt={1}>
                <FieldText>上证A股 深证A股</FieldText>
                <Btn $w={45} $h={16}>改变范围</Btn>
              </GroupLine>
            </Group>
          </LeftPane>
          <RightPane>
            <TopPane>
              <ButtonStack>
                <StackBtn $w={47}>加入条件</StackBtn>
                <StackBtn $w={47} $mt={10}>删除条件</StackBtn>
                <StackBtn $w={47} $mt={36}>引入方案</StackBtn>
                <StackBtn $w={47} $mt={10}>保存方案</StackBtn>
              </ButtonStack>
              <ListPane>
                <ListLabel>选股条件列表</ListLabel>
                <ListBox>
                  <ListItem>{"金蝴蝶   日线"}</ListItem>
                </ListBox>
              </ListPane>
            </TopPane>
            <RadioRow>
              <Radio>全部条件相与</Radio>
              <Radio>全部条件相或</Radio>
            </RadioRow>
            <DoneText>选股完毕</DoneText>
            <OptionRow $mt={4}>
              <Check />
              使用涨跌不定周期
              <ReadOnly $w={139} $gap={5} />
            </OptionRow>
            <OptionRow $mt={5}>
              <Spacer />
              品种数
              <ReadOnly $w={29} $gap={2}>4535</ReadOnly>
              <FieldText>&nbsp;&nbsp;选中数</FieldText>
              <ReadOnly $w={49} $gap={2}>11/0.2%</ReadOnly>
            </OptionRow>
            <OptionRow $mt={8}>
              <Check $on>✓</Check>
              前复权数据
              <Check $gap={7} />
              剔除当前未交易的品种
              <Check $gap={8} />
              剔除ST品种
            </OptionRow>
            <OptionRow $mt={2} $h={24}>
              <Check />
              时间段内满足条件
              <Spacer />
              <Btn $w={52}>选股入板块</Btn>
              <Btn $w={47} $ml={10}>执行选股</Btn>
            </OptionRow>
            <OptionRow $mt={-2} $h={17}>
              <Spacer />
              <Btn $w={47} $h={16}>关闭</Btn>
            </OptionRow>
          </RightPane>
        </Columns>
      </DialogBody>
    </Dialog>

    <Banner>
      <BannerTitle>公式指标网</BannerTitle>
      <Logo />
      <BannerUrl>www.9m8.cn</BannerUrl>
      <BannerFaint>GPXiazai.com 股票下载</BannerFaint>
    </Banner>
  </Page>
);

export default App;
